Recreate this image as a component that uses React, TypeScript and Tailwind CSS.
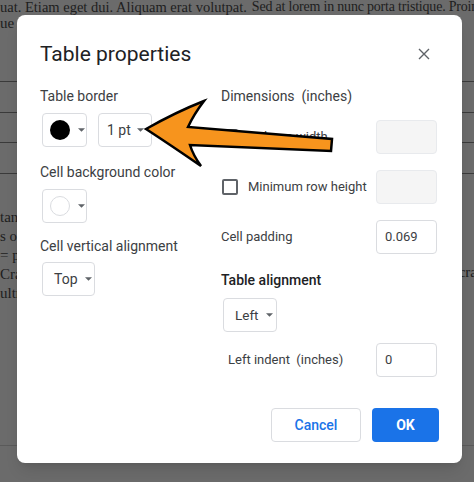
import React from 'react';

const Caret = () => (
  <svg width="7" height="4" viewBox="0 0 7 4" className="shrink-0">
    <path d="M0 0.3 L7 0.3 L3.5 3.8 Z" fill="#5f6368" />
  </svg>
);

const Label = ({ children, className = '' }: { children: React.ReactNode; className?: string }) => (
  <div className={`h-4 text-[14px] leading-4 text-[#3c4043] whitespace-nowrap ${className}`}>{children}</div>
);

const DropButton = ({ children, className = '' }: { children: React.ReactNode; className?: string }) => (
  <div className={`flex h-[34px] items-center gap-2 whitespace-nowrap rounded border border-[#dadce0] bg-white ${className}`}>
    {children}
    <Caret />
  </div>
);

const Checkbox = () => (
  <div className="h-4 w-4 shrink-0 rounded-[2px] border-2 border-[#5f6368]" />
);

const NumberBox = ({ value, disabled }: { value?: string; disabled?: boolean }) => (
  <div
    className={`flex h-[34px] w-[61px] items-center rounded border px-2 text-[13px] text-[#3c4043] ${
      disabled ? 'border-[#e8eaed] bg-[#f5f5f5]' : 'border-[#dadce0] bg-white'
    }`}
  >
    {value}
  </div>
);

export default function App() {
  return (
    <div className="relative h-[482px] w-[474px] overflow-hidden bg-[#6b6b6b] font-['Liberation_Serif',serif] text-[15px] text-[#1e1e1e]">
      {/* document behind the overlay */}
      <div className="flex flex-col">
        <div className="flex h-[14px] items-end whitespace-nowrap text-[14.5px] leading-[14px]">
          <span>uat. Etiam eget dui. Aliquam erat volutpat.</span>
          <span className="ml-[5px] text-[14px] tracking-[-0.2px]">Sed at lorem in nunc porta tristique. Proin</span>
        </div>
        <div className="h-[19px] leading-[19px]">ue s</div>
        <div className="h-[49px] border-b border-[#3a3a3a]" />
        <div className="h-[31px] border-b border-[#3a3a3a]" />
        <div className="h-[30px] border-b border-[#3a3a3a]" />
        <div className="h-[31px] border-b border-[#3a3a3a]" />
        <div className="mt-[34px] flex justify-between leading-[19px]">
          <div className="flex flex-col">
            <span>tan</span>
            <span>s oc</span>
            <span>= pe</span>
            <span>Cra</span>
            <span>ultr</span>
          </div>
          <div className="mt-[55px] -mr-[3px]">cra</div>
        </div>
        <div className="mt-[142px] border-b border-[#5a5a5a]" />
      </div>

      {/* dialog */}
      <div className="absolute left-[17px] top-[15px] flex h-[448px] w-[445px] flex-col rounded-lg bg-white pl-[23px] pr-[25px] font-['Roboto',sans-serif] shadow-lg">
        <div className="mt-[25px] flex h-7 items-center justify-between">
          <div className="text-[21px] leading-7 text-[#202124]">Table properties</div>
          <svg width="12" height="12" viewBox="0 0 12 12" className="mr-[7px]">
            <path d="M1 1 L11 11 M11 1 L1 11" stroke="#5f6368" strokeWidth="1.4" />
          </svg>
        </div>

        <div className="mt-[20px] flex">
          {/* left column */}
          <div className="flex w-[181px] flex-col">
            <Label>Table border</Label>
            <div className="mt-[9px] flex gap-[11px] pl-[2px]">
              <DropButton className="w-[45px] pl-[7px]">
                <div className="h-[20px] w-[20px] rounded-full bg-black" />
              </DropButton>
              <DropButton className="w-[54px] gap-[6px] pl-[8px] text-[14px] text-[#3c4043]">
                <span>1 pt</span>
              </DropButton>
            </div>
            <Label className="mt-[17px]">Cell background color</Label>
            <div className="mt-[9px] pl-[2px]">
              <DropButton className="w-[45px] pl-[7px]">
                <div className="h-[20px] w-[20px] rounded-full border border-[#dadce0] bg-white" />
              </DropButton>
            </div>
            <Label className="mt-[15px]">Cell vertical alignment</Label>
            <div className="mt-[8px] pl-[2px]">
              <DropButton className="w-[53px] gap-[7px] pl-[11px] text-[14px] text-[#3c4043]">
                <span>Top</span>
              </DropButton>
            </div>
          </div>

          {/* right column */}
          <div className="flex flex-1 flex-col">
            <Label className="text-[13.5px]">Dimensions&nbsp; (inches)</Label>
            <div className="mt-[16px] flex items-center justify-between">
              <div className="flex items-center gap-[10px] pl-[1px]">
                <Checkbox />
                <span className="text-[13px] text-[#3c4043]">Column width</span>
              </div>
              <NumberBox disabled />
            </div>
            <div className="mt-[16px] flex items-center justify-between">
              <div className="flex items-center gap-[10px] pl-[1px]">
                <Checkbox />
                <span className="text-[13px] text-[#3c4043]">Minimum row height</span>
              </div>
              <NumberBox disabled />
            </div>
            <div className="mt-[16px] flex items-center justify-between">
              <span className="text-[13px] text-[#3c4043]">Cell padding</span>
              <NumberBox value="0.069" />
            </div>
            <Label className="mt-[18px] text-[13px] font-medium text-[#202124]">Table alignment</Label>
            <div className="mt-[10px] pl-[2px]">
              <DropButton className="w-[54px] gap-[7px] pl-[11px] text-[13.5px] text-[#3c4043]">
                <span>Left</span>
              </DropButton>
            </div>
            <div className="mt-[11px] flex items-center justify-between">
              <span className="pl-[7px] text-[13px] text-[#3c4043]">Left indent&nbsp; (inches)</span>
              <NumberBox value="0" />
            </div>
          </div>
        </div>

        <div className="-mr-[2px] mt-[31px] flex justify-end gap-[11px]">
          <div className="flex h-[34px] w-[90px] items-center justify-center rounded border border-[#dadce0] text-[14px] font-medium text-[#1a73e8]">
            Cancel
          </div>
          <div className="flex h-[34px] w-[67px] items-center justify-center rounded bg-[#1a73e8] text-[14px] font-bold text-white">
            OK
          </div>
        </div>
      </div>

      {/* annotation arrow */}
      <svg className="pointer-events-none absolute left-0 top-0" width="474" height="482" viewBox="0 0 474 482">
        <path
          d="M146 129 Q176 112 204 101 Q194 114 188 127 L332 139 L331 151 L190 145 Q193 155 201 166 Q172 146 146 129 Z"
          fill="#f7941d"
          stroke="#000"
          strokeWidth="2.5"
          strokeLinejoin="miter"
        />
      </svg>
    </div>
  );
}
